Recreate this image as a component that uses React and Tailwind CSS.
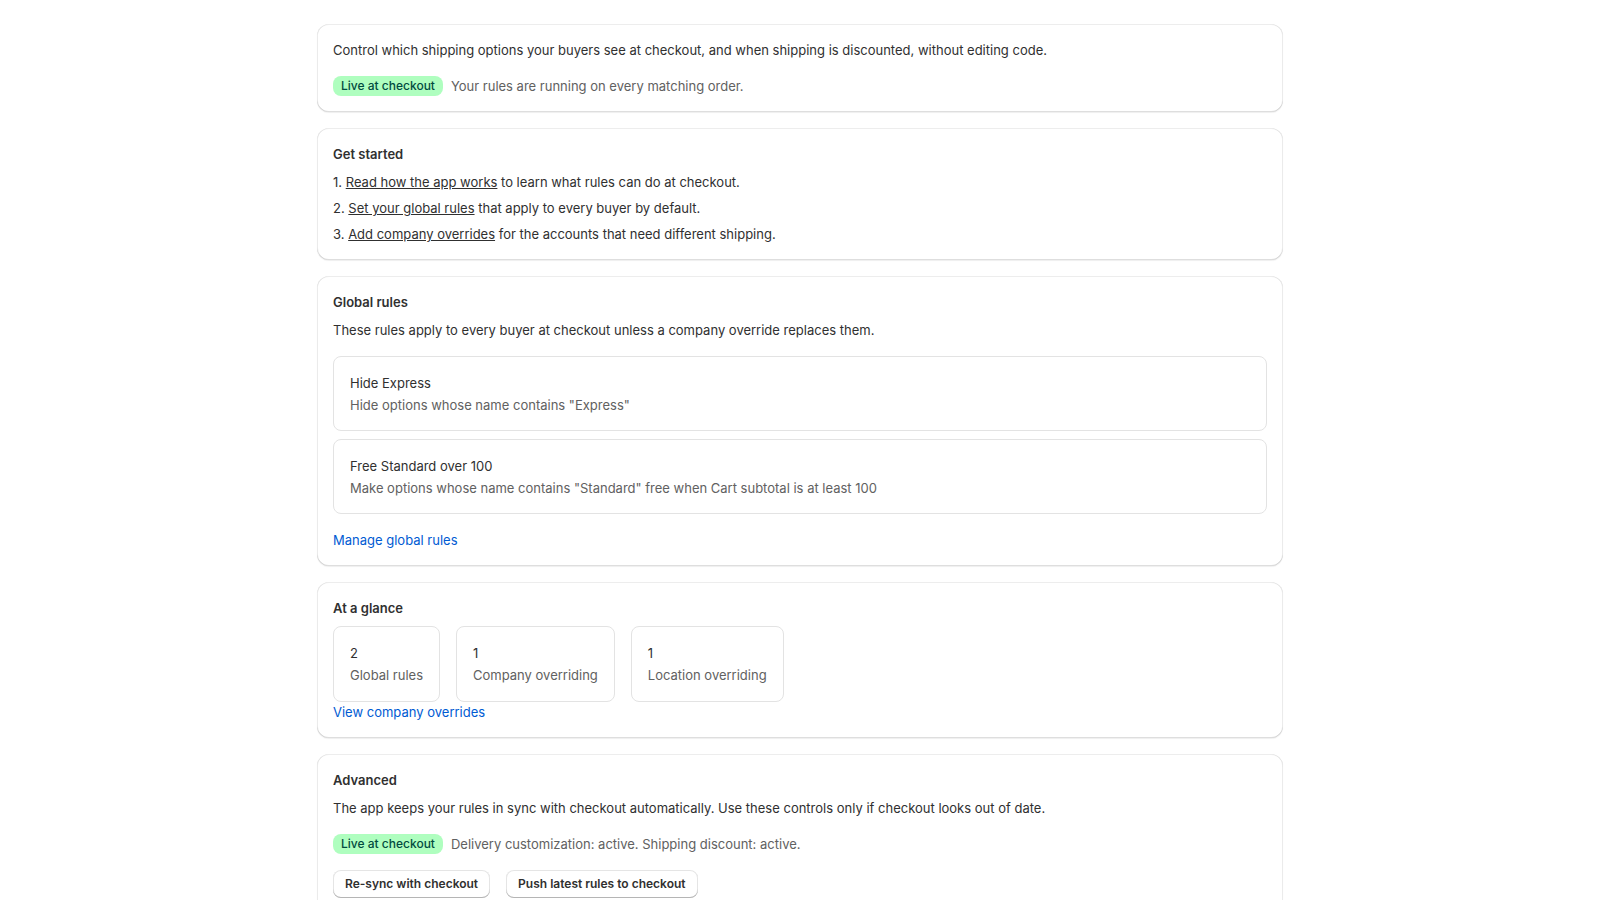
const cardShadow =
  "shadow-[0_1px_1px_0_rgba(26,26,26,0.07),inset_0_1px_0_0_rgba(204,204,204,0.35),inset_0_-1px_0_0_rgba(0,0,0,0.13),inset_-1px_0_0_0_rgba(0,0,0,0.08),inset_1px_0_0_0_rgba(0,0,0,0.08)]";

const Card = ({ children }) => (
  <section className={`bg-white rounded-xl p-4 flex flex-col ${cardShadow}`}>
    {children}
  </section>
);

const Heading = ({ children }) => (
  <h2 className="text-[13px] leading-5 font-semibold text-[#303030]">{children}</h2>
);

const Badge = ({ children }) => (
  <span className="inline-flex items-center h-5 px-2 rounded-lg bg-[#affebf] text-[#014b40] text-[12px] leading-4 font-medium">
    {children}
  </span>
);

const Button = ({ children }) => (
  <button
    type="button"
    className="h-7 px-3 rounded-lg bg-white text-[12px] font-semibold text-[#303030] shadow-[inset_0_-1px_0_0_#b5b5b5,inset_0_0_0_1px_rgba(0,0,0,0.1)]"
  >
    {children}
  </button>
);

const Link = ({ children }) => (
  <a href="#" className="text-[#005bd3] hover:underline self-start">
    {children}
  </a>
);

const rules = [
  { name: "Hide Express", desc: 'Hide options whose name contains "Express"' },
  {
    name: "Free Standard over 100",
    desc: 'Make options whose name contains "Standard" free when Cart subtotal is at least 100',
  },
];

const stats = [
  { value: "2", label: "Global rules" },
  { value: "1", label: "Company overriding" },
  { value: "1", label: "Location overriding" },
];

export default function App() {
  return (
    <div
      className="min-h-screen bg-white text-[13px] leading-5 text-[#303030]"
      style={{ fontFamily: "Inter, 'Noto Sans', sans-serif" }}
    >
      <main className="w-[966px] mx-auto pt-6 pb-6 flex flex-col gap-4">
        <Card>
          <p>
            Control which shipping options your buyers see at checkout, and when shipping is
            discounted, without editing code.
          </p>
          <div className="mt-4 flex items-center gap-2">
            <Badge>Live at checkout</Badge>
            <span className="text-[#616161]">Your rules are running on every matching order.</span>
          </div>
        </Card>

        <Card>
          <Heading>Get started</Heading>
          <ol className="mt-2 flex flex-col gap-1.5">
            <li>
              1. <a href="#" className="underline">Read how the app works</a> to learn what rules can do at
              checkout.
            </li>
            <li>
              2. <a href="#" className="underline">Set your global rules</a> that apply to every buyer by
              default.
            </li>
            <li>
              3. <a href="#" className="underline">Add company overrides</a> for the accounts that need
              different shipping.
            </li>
          </ol>
        </Card>

        <Card>
          <Heading>Global rules</Heading>
          <p className="mt-2">
            These rules apply to every buyer at checkout unless a company override replaces them.
          </p>
          <div className="mt-4 flex flex-col gap-2">
            {rules.map((r) => (
              <div
                key={r.name}
                className="border border-[#e3e3e3] rounded-lg px-4 pt-4 pb-[15px] flex flex-col gap-0.5"
              >
                <span>{r.name}</span>
                <span className="text-[#616161]">{r.desc}</span>
              </div>
            ))}
          </div>
          <div className="mt-4 flex">
            <Link>Manage global rules</Link>
          </div>
        </Card>

        <Card>
          <Heading>At a glance</Heading>
          <div className="mt-2 flex gap-4">
            {stats.map((s) => (
              <div key={s.label} className="border border-[#e3e3e3] rounded-lg p-4 flex flex-col gap-0.5">
                <span>{s.value}</span>
                <span className="text-[#616161]">{s.label}</span>
              </div>
            ))}
          </div>
          <div className="flex">
            <Link>View company overrides</Link>
          </div>
        </Card>

        <Card>
          <Heading>Advanced</Heading>
          <p className="mt-2">
            The app keeps your rules in sync with checkout automatically. Use these controls only if
            checkout looks out of date.
          </p>
          <div className="mt-4 flex items-center gap-2">
            <Badge>Live at checkout</Badge>
            <span className="text-[#616161]">Delivery customization: active. Shipping discount: active.</span>
          </div>
          <div className="mt-4 flex gap-4">
            <Button>Re-sync with checkout</Button>
            <Button>Push latest rules to checkout</Button>
          </div>
        </Card>
      </main>
    </div>
  );
}
